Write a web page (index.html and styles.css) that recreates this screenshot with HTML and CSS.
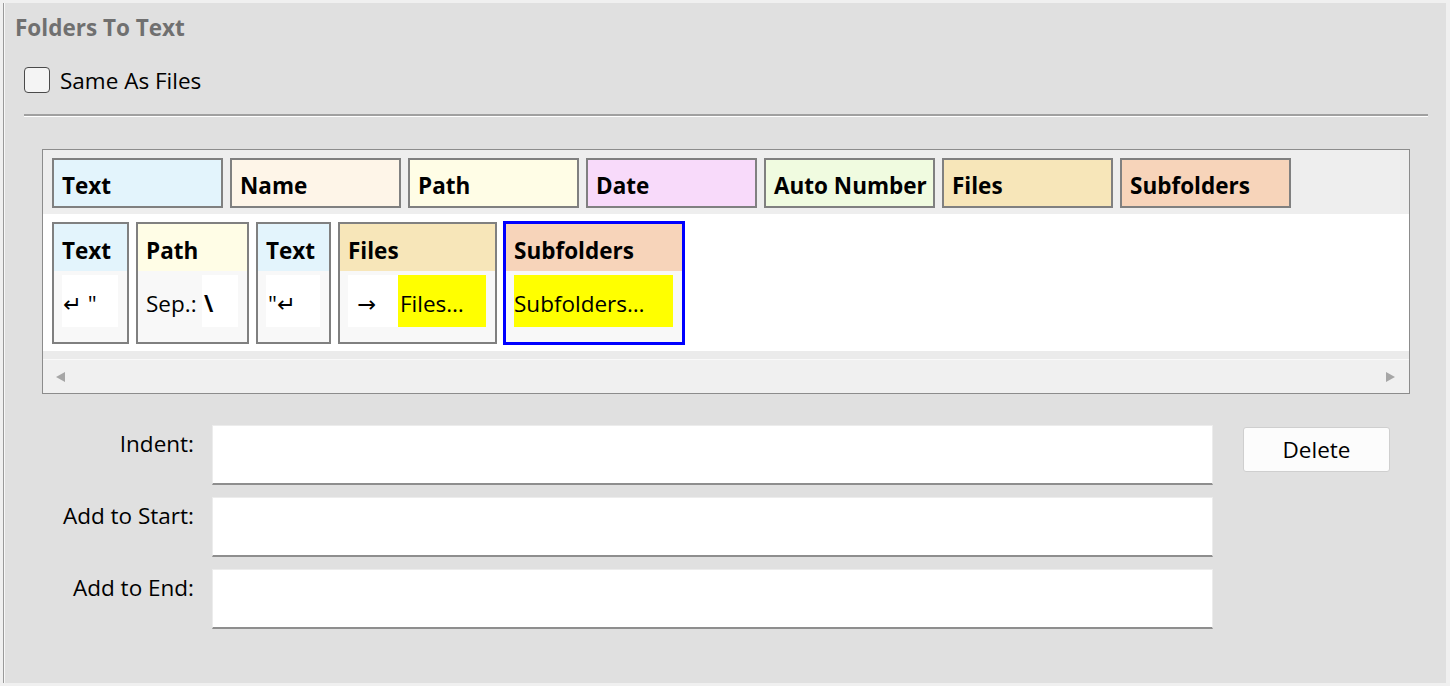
FILE: index.html
```html
<!DOCTYPE html>
<html lang="en">
<head>
<meta charset="utf-8">
<title>Folders To Text</title>
<link rel="stylesheet" href="styles.css">
</head>
<body>
<div class="panel">
  <h1 class="title">Folders To Text</h1>

  <label class="check-row">
    <input type="checkbox" class="checkbox">
    <span class="check-label">Same As Files</span>
  </label>

  <hr class="sep">

  <div class="designer">
    <div class="palette">
      <div class="chip c-text">Text</div>
      <div class="chip c-name">Name</div>
      <div class="chip c-path">Path</div>
      <div class="chip c-date">Date</div>
      <div class="chip c-auto">Auto Number</div>
      <div class="chip c-files">Files</div>
      <div class="chip c-sub">Subfolders</div>
    </div>

    <div class="tokens">
      <div class="token w-t1">
        <div class="tok-head c-text">Text</div>
        <div class="tok-body"><span class="seg white s-56">↵ "</span></div>
      </div>
      <div class="token w-t2">
        <div class="tok-head c-path">Path</div>
        <div class="tok-body"><span class="seg plain s-sep">Sep.:</span><span class="seg white s-36 strong">\</span></div>
      </div>
      <div class="token w-t3">
        <div class="tok-head c-text">Text</div>
        <div class="tok-body"><span class="seg white s-54">"↵</span></div>
      </div>
      <div class="token w-t4">
        <div class="tok-head c-files">Files</div>
        <div class="tok-body"><span class="seg white s-50 arrow-seg">→</span><span class="seg hl s-88">Files…</span></div>
      </div>
      <div class="token w-t5 selected">
        <div class="tok-head c-sub">Subfolders</div>
        <div class="tok-body"><span class="seg hl s-159 flush">Subfolders…</span></div>
      </div>
    </div>

    <div class="gutter"></div>
    <div class="hscroll">
      <span class="tri tri-left"></span>
      <span class="tri tri-right"></span>
    </div>
  </div>

  <div class="form">
    <label class="f-label">Indent:</label>
    <input class="f-input" type="text">
    <button class="btn" type="button">Delete</button>

    <label class="f-label">Add to Start:</label>
    <input class="f-input" type="text">

    <label class="f-label">Add to End:</label>
    <input class="f-input" type="text">
  </div>
</div>
</body>
</html>
```

FILE: styles.css
```css
* {
  box-sizing: border-box;
}

html,
body {
  margin: 0;
  height: 100%;
}

body {
  background: #f0f0f0;
  font-family: "Open Sans", "DejaVu Sans", sans-serif;
  font-size: 22.5px;
  line-height: 30px;
  color: #000;
  overflow: hidden;
}

/* main settings panel */
.panel {
  margin: 3px 4px 3px 3px;
  height: 680px;
  background: #e0e0e0;
  border-left: 1px solid #9a9a9a;
  box-shadow: inset 1px 0 0 #f7f7f7;
  padding-top: 10px;
  display: flex;
  flex-direction: column;
}

.title {
  margin: 0 0 0 11px;
  font-size: 22.5px;
  font-weight: 700;
  line-height: 30px;
  color: #707070;
}

.check-row {
  margin: 24px 0 0 20px;
  display: flex;
  align-items: flex-start;
  gap: 10px;
  width: max-content;
}

.checkbox {
  appearance: none;
  -webkit-appearance: none;
  margin: 0;
  width: 26px;
  height: 26px;
  border: 1.5px solid #4a4a4a;
  border-radius: 4px;
  background: #f4f4f4;
}

.check-label {
  margin-top: -1px;
}

.sep {
  margin: 18px 18px 0 20px;
  height: 3px;
  border: 0;
  border-top: 2px solid #a0a0a0;
  border-bottom: 1px solid #ffffff;
}

/* token designer */
.designer {
  margin: 32px 36px 0 38px;
  border: 1px solid #8c8c8c;
  background: #ffffff;
}

.palette {
  background: #eeeeee;
  padding: 8px 9px 6px;
  display: flex;
  gap: 7px;
}

.chip {
  width: 171px;
  height: 50px;
  border: 2px solid #808080;
  padding: 11px 8px 0;
  font-weight: 700;
  white-space: nowrap;
  overflow: hidden;
}

.c-text  { background: #e3f4fc; }
.c-name  { background: #fef5e8; }
.c-path  { background: #fffde6; }
.c-date  { background: #f8dafa; }
.c-auto  { background: #f0fbe0; }
.c-files { background: #f7e6b9; }
.c-sub   { background: #f7d4ba; }

.tokens {
  padding: 8px 9px 7px;
  display: flex;
  gap: 7px;
  align-items: flex-start;
}

.token {
  height: 122px;
  border: 2px solid #808080;
  display: flex;
  flex-direction: column;
}

.token.selected {
  border-color: #0000ff;
  box-shadow: 0 0 0 1px #0000ff;
}

.w-t1 { width: 77px; }
.w-t2 { width: 113px; }
.w-t3 { width: 75px; }
.w-t4 { width: 159px; }
.w-t5 { width: 180px; }

.tok-head {
  height: 47px;
  padding: 12px 8px 0;
  font-weight: 700;
  white-space: nowrap;
}

.tok-body {
  flex: 1;
  background: #f8f8f8;
  padding: 4px 8px 0;
  display: flex;
  align-items: flex-start;
}

.seg {
  height: 52px;
  padding: 6px 0 0 1px;
  line-height: 46px;
  white-space: nowrap;
  overflow: hidden;
  flex: none;
}

.seg.white { background: #ffffff; }
.seg.hl    { background: #ffff00; }
.seg.plain { background: transparent; padding-left: 0; }
.seg.strong { font-weight: 700; padding-left: 2px; }
.seg.flush { padding-left: 0; }
.seg.arrow-seg { padding-left: 9px; }

.s-56  { width: 56px; }
.s-sep { width: 56px; }
.s-36  { width: 36px; }
.s-54  { width: 54px; padding-left: 2px; }
.s-50  { width: 50px; }
.s-88  { width: 88px; padding-left: 2px; }
.s-159 { width: 159px; }

.gutter {
  height: 8px;
  background: #ebebeb;
}

.hscroll {
  height: 34px;
  background: #f0f0f0;
  border-top: 1px solid #f9f9f9;
  display: flex;
  align-items: center;
  justify-content: space-between;
  padding: 0 14px 0 13px;
}

.tri {
  width: 0;
  height: 0;
  border-top: 5.5px solid transparent;
  border-bottom: 5.5px solid transparent;
}

.tri-left {
  border-right: 9px solid #a6a6a6;
}

.tri-right {
  border-left: 9px solid #a6a6a6;
}

/* indent / prefix / suffix fields */
.form {
  margin: 31px 0 0 38px;
  display: grid;
  grid-template-columns: 152px 1001px 159px;
  column-gap: 18px;
  row-gap: 12px;
  align-items: start;
}

.f-label {
  grid-column: 1;
  text-align: right;
  padding-top: 4px;
  white-space: nowrap;
}

.f-input {
  grid-column: 2;
  height: 60px;
  margin: 0;
  border: 1px solid #ececec;
  border-bottom: 2px solid #8e8e8e;
  background: #ffffff;
  font: inherit;
  padding: 0 6px;
  outline: none;
}

.btn {
  grid-column: 3;
  grid-row: 1;
  justify-self: end;
  width: 147px;
  height: 45px;
  margin-top: 2px;
  border: 1px solid #cfcfcf;
  border-radius: 3px;
  background: #fcfcfc;
  font: inherit;
  color: #000;
  padding: 0;
}
```
